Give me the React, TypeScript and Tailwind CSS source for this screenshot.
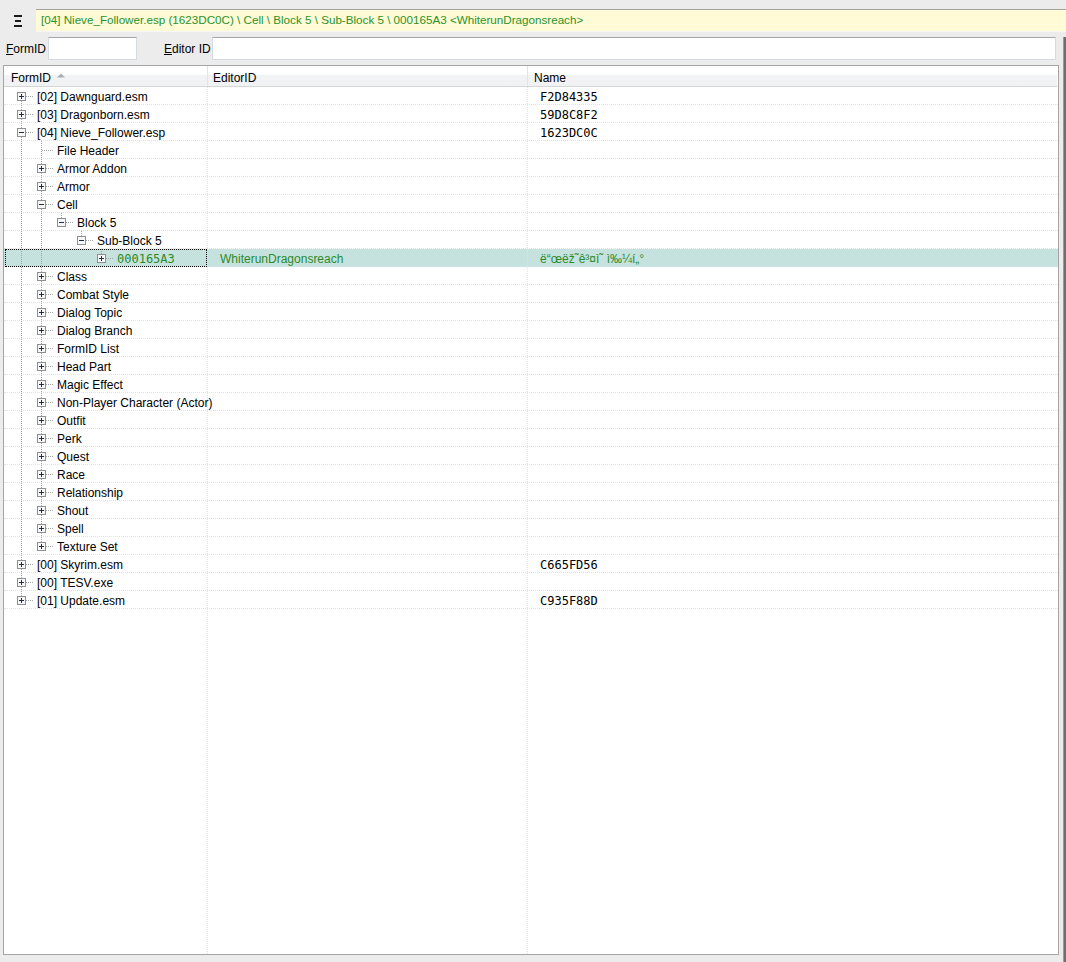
import React from "react";

type Node = {
  label: string;
  level: number;
  exp?: "plus" | "minus";
  editor?: string;
  name?: string;
  sel?: boolean;
  mono?: boolean;
};

const nodes: Node[] = [
  { label: "[02] Dawnguard.esm", level: 0, exp: "plus", name: "F2D84335" },
  { label: "[03] Dragonborn.esm", level: 0, exp: "plus", name: "59D8C8F2" },
  { label: "[04] Nieve_Follower.esp", level: 0, exp: "minus", name: "1623DC0C" },
  { label: "File Header", level: 1 },
  { label: "Armor Addon", level: 1, exp: "plus" },
  { label: "Armor", level: 1, exp: "plus" },
  { label: "Cell", level: 1, exp: "minus" },
  { label: "Block 5", level: 2, exp: "minus" },
  { label: "Sub-Block 5", level: 3, exp: "minus" },
  {
    label: "000165A3",
    level: 4,
    exp: "plus",
    editor: "WhiterunDragonsreach",
    name: "\u00EB\u201C\u0153\u00EB\u017E\u02DC\u00EA\u00B3\u00A4\u00EC\u02DC \u00EC\u2030\u00BC\u00ED\u201E\u00B0",
    sel: true,
    mono: true,
  },
  { label: "Class", level: 1, exp: "plus" },
  { label: "Combat Style", level: 1, exp: "plus" },
  { label: "Dialog Topic", level: 1, exp: "plus" },
  { label: "Dialog Branch", level: 1, exp: "plus" },
  { label: "FormID List", level: 1, exp: "plus" },
  { label: "Head Part", level: 1, exp: "plus" },
  { label: "Magic Effect", level: 1, exp: "plus" },
  { label: "Non-Player Character (Actor)", level: 1, exp: "plus" },
  { label: "Outfit", level: 1, exp: "plus" },
  { label: "Perk", level: 1, exp: "plus" },
  { label: "Quest", level: 1, exp: "plus" },
  { label: "Race", level: 1, exp: "plus" },
  { label: "Relationship", level: 1, exp: "plus" },
  { label: "Shout", level: 1, exp: "plus" },
  { label: "Spell", level: 1, exp: "plus" },
  { label: "Texture Set", level: 1, exp: "plus" },
  { label: "[00] Skyrim.esm", level: 0, exp: "plus", name: "C665FD56" },
  { label: "[00] TESV.exe", level: 0, exp: "plus" },
  { label: "[01] Update.esm", level: 0, exp: "plus", name: "C935F88D" },
];

function nextAt(i: number, k: number): boolean {
  for (let j = i + 1; j < nodes.length; j++) {
    if (nodes[j].level <= k) return nodes[j].level === k;
  }
  return false;
}

const LINE = "#a3a3a3";

function TreeGlyph({ n, i }: { n: Node; i: number }) {
  const anc: boolean[] = [];
  for (let k = 0; k < n.level; k++) anc.push(nextAt(i, k));
  const hasNext = nextAt(i, n.level);
  const gx = 17 + 20 * n.level;
  const w = gx + 16;
  return (
    <svg width={w} height={18} className="absolute left-0 top-0" shapeRendering="crispEdges">
      {anc.map((on, k) =>
        on ? (
          <line key={k} x1={17 + 20 * k + 0.5} y1={0} x2={17 + 20 * k + 0.5} y2={18} stroke={LINE} strokeDasharray="1 1" />
        ) : null
      )}
      {i !== 0 && <line x1={gx + 0.5} y1={0} x2={gx + 0.5} y2={10} stroke={LINE} strokeDasharray="1 1" />}
      {hasNext && <line x1={gx + 0.5} y1={10} x2={gx + 0.5} y2={18} stroke={LINE} strokeDasharray="1 1" />}
      <line x1={gx + 1} y1={9.5} x2={gx + 13} y2={9.5} stroke={LINE} strokeDasharray="1 1" />
      {n.exp && (
        <g>
          <rect x={gx - 3.5} y={5.5} width={8} height={8} fill="#f7f7f7" stroke="#8e8f92" />
          <line x1={gx - 2} y1={9.5} x2={gx + 3} y2={9.5} stroke="#1f2f4a" />
          {n.exp === "plus" && <line x1={gx + 0.5} y1={7} x2={gx + 0.5} y2={12} stroke="#1f2f4a" />}
        </g>
      )}
    </svg>
  );
}

function Row({ n, i }: { n: Node; i: number }) {
  const textColor = n.sel ? "text-[#2b8a2b]" : "text-[#000000]";
  return (
    <div className={`flex h-[18px] shrink-0 border-b border-dotted border-[#e2e2e2] ${n.sel ? "bg-[#c6e2de]" : ""}`}>
      <div className="relative w-[204px] shrink-0 border-r border-dotted border-[#e2e2e2]">
        <TreeGlyph n={n} i={i} />
        <div
          className={`absolute top-0 h-[17px] leading-[20px] whitespace-nowrap ${textColor} ${
            n.mono ? "font-['DejaVu_Sans_Mono',monospace] text-[12px]" : "text-[12px]"
          }`}
          style={{ left: 33 + 20 * n.level }}
        >
          {n.label}
        </div>
        {n.sel && <div className="absolute left-px top-0 right-0 bottom-[-1px] border border-dotted border-[#000000]" />}
      </div>
      <div className={`w-[320px] shrink-0 border-r border-dotted border-[#e2e2e2] pl-[12px] h-[17px] leading-[20px] text-[12px] whitespace-nowrap ${textColor}`}>
        {n.editor ?? ""}
      </div>
      <div
        className={`flex-1 pl-[12px] h-[17px] leading-[20px] whitespace-nowrap ${textColor} ${
          n.sel ? "text-[12px]" : "font-['DejaVu_Sans_Mono',monospace] text-[12px]"
        }`}
      >
        {n.name ?? ""}
      </div>
    </div>
  );
}

export default function App() {
  return (
    <div className="w-[1066px] h-[962px] bg-[#ececec] flex flex-col overflow-hidden font-['Liberation_Sans',Arial,sans-serif] text-[12px] text-[#000000]">
      {/* top bar */}
      <div className="flex h-[36px] shrink-0">
        <div className="w-[36px] shrink-0 flex justify-center pt-[15px] pr-[1px]">
          <svg width="8" height="12" viewBox="0 0 8 12" shapeRendering="crispEdges">
            <rect x="0" y="0" width="8" height="2" fill="#1b1b1b" />
            <rect x="1" y="5" width="6" height="2" fill="#1b1b1b" />
            <rect x="0" y="10" width="8" height="2" fill="#1b1b1b" />
          </svg>
        </div>
        <div className="flex-1 mt-[9px] h-[23px] border-t border-[#a2a2a2] border-b border-b-[#f6f6f6] bg-[#fffbd6] pl-[5px] leading-[20px] text-[11.65px] text-[#2a922a] whitespace-nowrap">
          [04] Nieve_Follower.esp (1623DC0C) \ Cell \ Block 5 \ Sub-Block 5 \ 000165A3 &lt;WhiterunDragonsreach&gt;
        </div>
      </div>

      <div className="flex flex-1 min-h-0">
        <div className="flex flex-col w-[1063px] shrink-0">
          {/* filter row */}
          <div className="flex items-center h-[23px] mt-[1px] shrink-0">
            <span className="ml-[6px] w-[40px]">
              <span className="underline">F</span>ormID
            </span>
            <div className="ml-[2px] w-[89px] h-[23px] bg-[#ffffff] border border-[#d5dae1] border-t-[#a3a5a9]" />
            <span className="ml-[27px] w-[47px] whitespace-nowrap">
              <span className="underline">E</span>ditor ID
            </span>
            <div className="ml-[1px] w-[844px] h-[23px] bg-[#ffffff] border border-[#d5dae1] border-t-[#a3a5a9]" />
          </div>

          {/* tree list */}
          <div className="ml-[3px] mt-[5px] w-[1056px] h-[890px] border border-[#a5a5a5] bg-[#ffffff] flex flex-col">
            <div className="flex h-[21px] shrink-0 border-b border-[#d5d5d5] bg-[linear-gradient(to_bottom,#ffffff_0%,#ffffff_42%,#f2f3f5_45%,#f1f2f4_100%)] mr-[1px]">
              <div className="w-[204px] shrink-0 border-r border-[#e3e4e6] flex items-center pl-[7px] pt-[3px]">
                <span>FormID</span>
                <svg width="8" height="5" className="ml-[6px] mt-[-4px]" viewBox="0 0 8 5">
                  <path d="M0 4.5 L4 0.5 L8 4.5 Z" fill="#a9adb3" />
                </svg>
              </div>
              <div className="w-[320px] shrink-0 border-r border-[#e3e4e6] flex items-center pl-[5px] pt-[3px]">EditorID</div>
              <div className="flex-1 flex items-center pl-[6px] pt-[3px]">Name</div>
            </div>
            {nodes.map((n, i) => (
              <Row key={i} n={n} i={i} />
            ))}
            <div className="flex flex-1">
              <div className="w-[204px] shrink-0 border-r border-dotted border-[#e2e2e2]" />
              <div className="w-[320px] shrink-0 border-r border-dotted border-[#e2e2e2]" />
              <div className="flex-1" />
            </div>
          </div>
        </div>
        <div className="w-[3px] shrink-0 mt-[1px] bg-[#6e6e6e] border-l border-[#9a9a9a]" />
      </div>
    </div>
  );
}
